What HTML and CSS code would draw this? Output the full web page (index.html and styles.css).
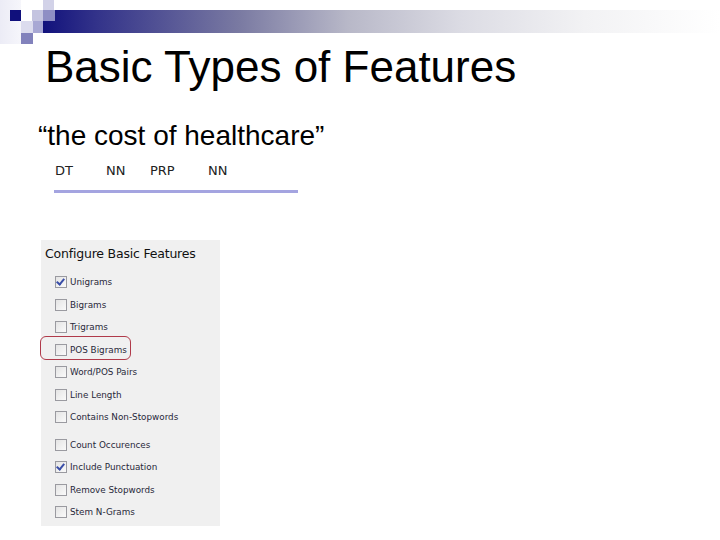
FILE: index.html
```html
<!DOCTYPE html>
<html>
<head>
<meta charset="utf-8">
<link rel="stylesheet" href="styles.css">
</head>
<body>
<div class="slide">
  <div class="deco">
    <div class="bar"></div>
    <div class="sq s1"></div>
    <div class="sq s2"></div>
    <div class="sq s3"></div>
    <div class="sq s4"></div>
    <div class="sq s5"></div>
    <div class="sq s6"></div>
    <div class="sq s7"></div>
    <div class="sq s8"></div>
    <div class="sq s9"></div>
  </div>
  <h1 class="title">Basic Types of Features</h1>
  <p class="quote">“the cost of healthcare”</p>
  <div class="tags">
    <span class="tag t1">DT</span>
    <span class="tag t2">NN</span>
    <span class="tag t3">PRP</span>
    <span class="tag t4">NN</span>
  </div>
  <div class="rule"></div>
  <div class="panel">
    <div class="panel-title">Configure Basic Features</div>
    <ul class="opts">
      <li class="opt"><span class="cb checked"></span>Unigrams</li>
      <li class="opt"><span class="cb"></span>Bigrams</li>
      <li class="opt"><span class="cb"></span>Trigrams</li>
      <li class="opt hl"><span class="cb"></span>POS Bigrams</li>
      <li class="opt"><span class="cb"></span>Word/POS Pairs</li>
      <li class="opt"><span class="cb"></span>Line Length</li>
      <li class="opt"><span class="cb"></span>Contains Non-Stopwords</li>
      <li class="opt gap"><span class="cb"></span>Count Occurences</li>
      <li class="opt"><span class="cb checked"></span>Include Punctuation</li>
      <li class="opt"><span class="cb"></span>Remove Stopwords</li>
      <li class="opt"><span class="cb"></span>Stem N-Grams</li>
    </ul>
  </div>
</div>
</body>
</html>
```
FILE: styles.css
```css
html, body {
  margin: 0;
  padding: 0;
  background: #ffffff;
}
.slide {
  width: 720px;
  height: 540px;
  position: relative;
  overflow: hidden;
  font-family: "Liberation Sans", Arial, sans-serif;
  display: flex;
  flex-direction: column;
}
.deco {
  position: relative;
  height: 44px;
  flex: none;
}
.bar {
  position: absolute;
  left: 43px;
  top: 10px;
  width: 677px;
  height: 23px;
  background: linear-gradient(to right, #12127c 0%, #33338a 8%, #7a7aa2 29%, #b8b8c8 45%, #dcdce4 62%, #f2f2f4 80%, #ffffff 100%);
}
.sq {
  position: absolute;
  width: 11px;
  height: 11px;
}
.s1 { left: 0; top: 0; width: 21px; height: 44px; background: linear-gradient(to right, #ececf6, #f6f6fb); }
.s2 { left: 10px; top: 10px; background: #10107c; }
.s3 { left: 21px; top: 10px; background: #ffffff; }
.s4 { left: 32px; top: 10px; background: #c4c4e0; }
.s5 { left: 43px; top: 0; background: #d2d2e8; }
.s6 { left: 43px; top: 10px; width: 12px; background: #8e8ec4; }
.s7 { left: 21px; top: 21px; width: 12px; height: 12px; background: #dcdcee; }
.s8 { left: 33px; top: 21px; width: 10px; height: 12px; background: #a8a8d4; }
.s9 { left: 21px; top: 33px; width: 12px; height: 11px; background: #8282bc; }

.title {
  margin: 0;
  padding-left: 45px;
  font-weight: normal;
  font-size: 44px;
  line-height: 46px;
  color: #000;
}
.quote {
  margin: 31px 0 0 0;
  padding-left: 38px;
  font-size: 28px;
  line-height: 30px;
  color: #000;
}
.tags {
  margin-top: 12px;
  height: 20px;
  position: relative;
  font-family: "DejaVu Sans", sans-serif;
  font-size: 13px;
  color: #222;
  display: flex;
  padding-left: 55px;
}
.tag { display: inline-block; }
.t1 { width: 51px; }
.t2 { width: 44px; }
.t3 { width: 58px; }
.rule {
  margin: 7px 0 0 54px;
  width: 244px;
  height: 3px;
  background: #a4a4e0;
}
.panel {
  margin: 47px 0 0 41px;
  width: 179px;
  height: 286px;
  background: #f0f0f0;
  box-sizing: border-box;
  padding: 6px 0 0 4px;
}
.panel-title {
  font-family: "DejaVu Sans", sans-serif;
  font-size: 12.5px;
  color: #111;
  letter-spacing: -0.2px;
  line-height: 16px;
}
.opts {
  list-style: none;
  margin: 9px 0 0 0;
  padding: 0 0 0 10px;
}
.opt {
  position: relative;
  display: flex;
  align-items: center;
  height: 22.5px;
  font-family: "DejaVu Sans", sans-serif;
  font-size: 8.8px;
  color: #28283a;
}
.opt.gap { margin-top: 5px; }
.cb {
  width: 10px;
  height: 10px;
  border: 1px solid #9a9aa0;
  background: linear-gradient(135deg, #e4e4e4, #fafafa);
  margin-right: 3px;
  position: relative;
  flex: none;
}
.cb.checked::after {
  content: "";
  position: absolute;
  left: 2px;
  top: 0px;
  width: 3px;
  height: 6px;
  border: solid #3a4ea8;
  border-width: 0 2px 2px 0;
  transform: rotate(40deg);
}
.opt.hl::before {
  content: "";
  position: absolute;
  left: -15px;
  top: -3px;
  width: 89px;
  height: 22px;
  border: 1px solid #b03a4a;
  border-radius: 6px;
}
```
